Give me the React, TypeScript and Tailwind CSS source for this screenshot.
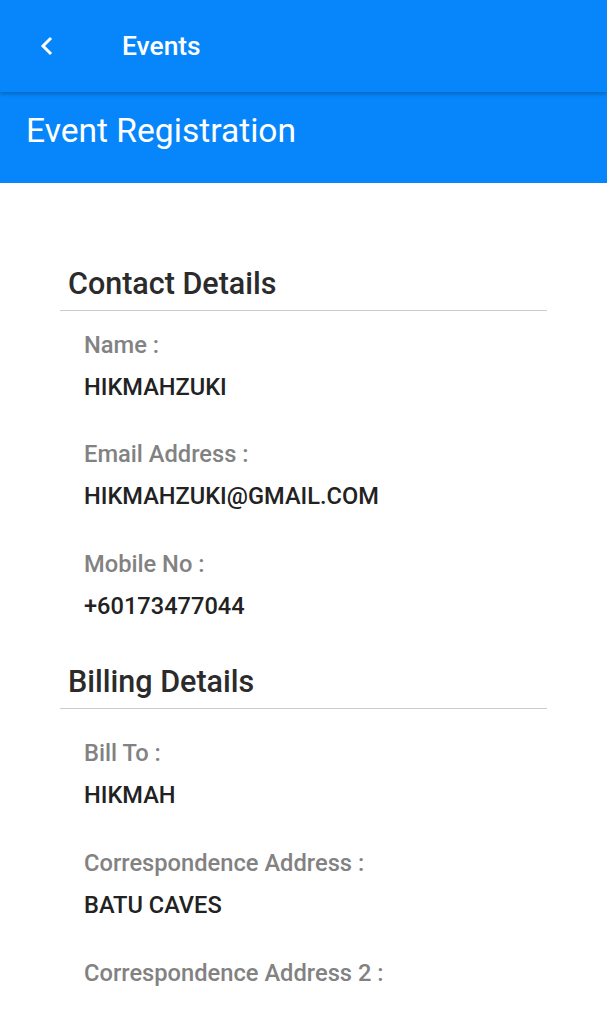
import React from "react";

function Field({ label, value, first, gap = 39 }: { label: string; value?: string; first?: boolean; gap?: number }) {
  return (
    <div className={first ? "" : gap === 40 ? "mt-[40px]" : "mt-[39px]"}>
      <div className="h-[28px] leading-[28px] text-[23.7px] font-medium text-[#828282] whitespace-nowrap">{label}</div>
      {value !== undefined && (
        <div className="mt-[14px] h-[28px] leading-[28px] text-[23.6px] font-medium text-[#222222] whitespace-nowrap">{value}</div>
      )}
    </div>
  );
}

export default function App() {
  return (
    <div className="w-[607px] h-[1036px] bg-white overflow-hidden" style={{ fontFamily: "Roboto, 'Liberation Sans', sans-serif" }}>
      <div className="relative z-10 h-[92px] bg-[#0786fb] flex items-center shadow-[0_2px_4px_rgba(0,0,0,0.25)]">
        <div className="w-[122px] pl-[38px] flex items-center">
          <svg width="18" height="22" viewBox="0 0 18 22" fill="none">
            <path d="M12 4 L5 11 L12 18" stroke="#ffffff" strokeWidth="3" strokeLinecap="square" strokeLinejoin="miter" />
          </svg>
        </div>
        <div className="text-white text-[26.4px] leading-none font-medium">Events</div>
      </div>
      <div className="h-[91px] bg-[#0786fb] flex items-center pl-[26px]">
        <div className="text-white text-[33.6px] leading-none font-normal -mt-[13px]">Event Registration</div>
      </div>
      <div className="px-[60px] pt-[83px]">
        <div className="border-b border-[#cccccc] pl-[8px] pb-[8px]">
          <div className="h-[36px] leading-[36px] text-[30.5px] font-medium text-[#2b2b2b]">Contact Details</div>
        </div>
        <div className="pl-[24px] pt-[20px]">
          <Field first label="Name :" value="HIKMAHZUKI" />
          <Field label="Email Address :" value="HIKMAHZUKI@GMAIL.COM" />
          <Field gap={40} label="Mobile No :" value="+60173477044" />
        </div>
        <div className="mt-[44px] border-b border-[#cccccc] pl-[8px] pb-[8px]">
          <div className="h-[36px] leading-[36px] text-[30.5px] font-medium text-[#2b2b2b]">Billing Details</div>
        </div>
        <div className="pl-[24px] pt-[30px]">
          <Field first label="Bill To :" value="HIKMAH" />
          <Field gap={40} label="Correspondence Address :" value="BATU CAVES" />
          <Field gap={40} label="Correspondence Address 2 :" />
        </div>
      </div>
    </div>
  );
}
